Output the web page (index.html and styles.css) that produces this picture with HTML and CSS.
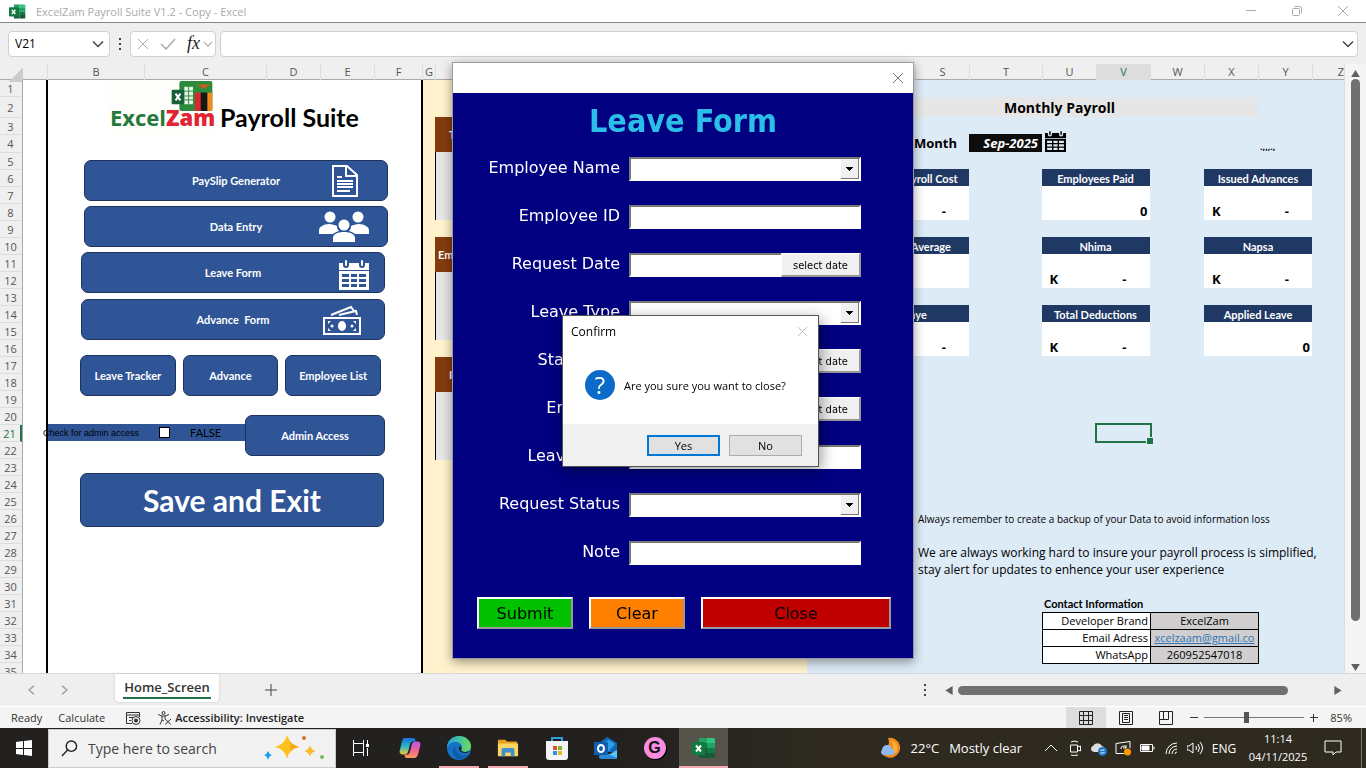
FILE: index.html
```html
<!DOCTYPE html>
<html lang="en">
<head>
    <meta charset="UTF-8">
    <meta name="viewport" content="width=device-width, initial-scale=1.0">
    <title>ExcelZam Payroll Suite V1.2</title>
    <link rel="stylesheet" href="styles.css">
</head>
<body>
    <!-- shared icons -->
    <svg class="defs" aria-hidden="true">
        <symbol id="i-excel" viewBox="0 0 24 24">
            <path fill="#21a366" d="M7 2h8v10H7z"/>
            <path fill="#33c481" d="M15 2h7a1 1 0 0 1 1 1v4h-8z"/>
            <path fill="#21a366" d="M15 7h8v5h-8z"/>
            <path fill="#107c41" d="M7 7h8v5H7z"/>
            <path fill="#185c37" d="M7 12h8v10H8a1 1 0 0 1-1-1z"/>
            <path fill="#107c41" d="M15 12h8v5h-8z"/>
            <path fill="#185c37" d="M15 17h8v4a1 1 0 0 1-1 1h-7z"/>
            <rect x="0" y="6" width="13" height="13" rx="1" fill="#107c41"/>
            <path stroke="#fff" stroke-width="2" d="M4 9.500l5 6M9 9.500l-5 6"/>
        </symbol>
        <symbol id="i-down" viewBox="0 0 12 12"><path fill="none" stroke="currentColor" stroke-width="1.500" d="M1 3.500l5 5 5-5"/></symbol>
        <symbol id="i-close" viewBox="0 0 12 12"><path fill="none" stroke="currentColor" stroke-width="1" d="M1 1l10 10M11 1L1 11"/></symbol>
        <symbol id="i-dots" viewBox="0 0 4 14"><path fill="currentColor" d="M1 1h2v2H1zM1 6h2v2H1zM1 11h2v2H1z"/></symbol>
        <symbol id="i-calendar" viewBox="0 0 30 30">
            <path fill="currentColor" fill-rule="evenodd" d="M0 3h4v2a3 3 0 0 0 6 0V3h10v2a3 3 0 0 0 6 0V3h4v7H0zM0 11h30v19H0zM3 14v3h7v-3zm9 0v3h6v-3zm8 0v3h7v-3zM3 19v3h7v-3zm9 0v3h6v-3zm8 0v3h7v-3zM3 24v3h7v-3zm9 0v3h6v-3zm8 0v3h7v-3z"/>
            <path stroke="currentColor" stroke-width="2" stroke-linecap="round" d="M7 1v4M23 1v4"/>
        </symbol>
    </svg>

    <header class="titlebar">
        <svg class="app-icon"><use href="#i-excel"/></svg>
        <span class="doc-name">ExcelZam Payroll Suite V1.2 - Copy - Excel</span>
        <div class="window-buttons">
            <button aria-label="Minimize"><svg viewBox="0 0 12 12"><path stroke="currentColor" d="M1 5.500h10"/></svg></button>
            <button aria-label="Restore"><svg viewBox="0 0 12 12"><g fill="none" stroke="currentColor"><rect x="1.500" y="3.500" width="7" height="7" rx="1"/><path d="M3.500 1.500h5a2 2 0 0 1 2 2v5"/></g></svg></button>
            <button aria-label="Close"><svg><use href="#i-close"/></svg></button>
        </div>
    </header>

    <div class="formula-bar">
        <div class="name-box">
            <input type="text" value="V21" aria-label="Name box">
            <button aria-label="Names"><svg><use href="#i-down"/></svg></button>
        </div>
        <svg class="dots"><use href="#i-dots"/></svg>
        <div class="fx-box">
            <button aria-label="Cancel"><svg><use href="#i-close"/></svg></button>
            <button aria-label="Enter"><svg class="tick" viewBox="0 0 16 12"><path fill="none" stroke="currentColor" stroke-width="1.500" d="M1 6l5 5L15 1"/></svg></button>
            <button class="fx" aria-label="Insert function">fx</button>
            <button aria-label="More"><svg class="small"><use href="#i-down"/></svg></button>
        </div>
        <div class="formula-box">
            <input type="text" aria-label="Formula">
            <button aria-label="Expand"><svg><use href="#i-down"/></svg></button>
        </div>
    </div>

    <main class="workspace">
        <div class="grid-area">
            <div class="col-heads">
                <span class="corner"></span>
                <span></span><span>B</span><span>C</span><span>D</span><span>E</span><span>F</span><span>G</span><span></span>
                <span>S</span><span>T</span><span>U</span><span class="active">V</span><span>W</span><span>X</span><span>Y</span><span class="last">Z</span>
            </div>
            <div class="sheet">
                <div class="row-heads">
                    <span>1</span><span>2</span><span>3</span><span>4</span><span>5</span><span>6</span><span>7</span><span>8</span><span>9</span><span>10</span>
                    <span>11</span><span>12</span><span>13</span><span>14</span><span>15</span><span>16</span><span>17</span><span>18</span><span>19</span><span>20</span>
                    <span class="active">21</span><span>22</span><span>23</span><span>24</span><span>25</span><span>26</span><span>27</span><span>28</span><span>29</span><span>30</span>
                    <span>31</span><span>32</span><span>33</span><span>34</span><span>35</span>
                </div>

                <section class="menu">
                    <div class="brand">
                        <div class="logo">
                            <svg viewBox="0 0 44 32">
                                <rect x="9" y="1" width="34" height="31" rx="2" fill="#2c8a3c"/>
                                <path fill="#e8f3e8" d="M14 7h9v18h-9z"/>
                                <path stroke="#2c8a3c" d="M14 11.500h9M14 16.500h9M14 20.500h9M18.500 7v18"/>
                                <path fill="#de2531" d="M25 13h6v19h-6z"/>
                                <path fill="#1a1414" d="M31 13h7v19h-7z"/>
                                <path fill="#f08a1c" d="M38 13h5v19h-5z"/>
                                <path fill="#c9611a" d="M26 4l6 1 2-1 2 1 6-1-5 3-1 2-2-1-2 1-1-2z"/>
                                <rect x="1" y="10" width="13" height="15" rx="1" fill="#17603a"/>
                                <path stroke="#fff" stroke-width="2" d="M5 14l5 7M10 14l-5 7"/>
                            </svg>
                            <span class="logo-text">Excel<b>Zam</b></span>
                        </div>
                        <h1>Payroll Suite</h1>
                    </div>

                    <div class="wide-buttons">
                        <button class="shape">PaySlip Generator
                            <svg class="doc" viewBox="0 0 26 32"><path fill="none" stroke="#fff" stroke-width="2" d="M1 1h14l10 9v21H1zM14 1v10h11"/><path stroke="#fff" stroke-width="2" d="M5 12h5M5 16h16M5 19h16M5 22h16M5 26h13"/></svg>
                        </button>
                        <button class="shape">Data Entry
                            <svg class="people" viewBox="0 0 50 32"><g fill="#fff"><circle cx="11" cy="6" r="5.500"/><circle cx="39" cy="6" r="5.500"/><circle cx="25" cy="14" r="5.500"/><path d="M0 23v-4c0-3 5-6 10-6 3 0 6 1 8 2 0 3 1 4 2 5-3 1-5 2-6 3zM50 23v-4c0-3-5-6-10-6-3 0-6 1-8 2 0 3-1 4-2 5 3 1 5 2 6 3zM14 31v-4c0-4 5-6 11-6s11 2 11 6v4z"/></g></svg>
                        </button>
                    </div>
                    <div class="wide-buttons shifted">
                        <button class="shape">Leave Form
                            <svg class="cal"><use href="#i-calendar"/></svg>
                        </button>
                        <button class="shape">Advance&nbsp; Form
                            <svg class="cash" viewBox="0 0 38 30"><g fill="none" stroke="#fff" stroke-width="2"><path d="M1 13h36v16H1z"/><path d="M8 10L28 2l3 4M16 10l17-4 1 4"/></g><path fill="#fff" d="M5 16h3l-3 3zM33 16v3l-3-3zM5 26v-3l3 3zM33 26h-3l3-3z"/><ellipse cx="19" cy="21" rx="4" ry="5" fill="#fff"/><circle cx="9" cy="21" r="1.500" fill="#fff"/><circle cx="29" cy="21" r="1.500" fill="#fff"/></svg>
                        </button>
                    </div>
                    <div class="small-buttons">
                        <button class="shape">Leave Tracker</button>
                        <button class="shape">Advance</button>
                        <button class="shape">Employee List</button>
                    </div>
                    <div class="admin">
                        <div class="admin-band">
                            <label for="admin">Check for admin access</label>
                            <input type="checkbox" id="admin">
                            <span>FALSE</span>
                        </div>
                        <button class="shape">Admin Access</button>
                    </div>
                    <button class="shape save">Save and Exit</button>
                </section>

                <section class="employees">
                    <div class="tile"><h3 class="indent">T</h3><p></p></div>
                    <div class="tile"><h3>Em</h3><p></p></div>
                    <div class="tile"><h3 class="indent">I</h3><p></p></div>
                </section>

                <section class="payroll">
                    <h2>Monthly Payroll</h2>
                    <div class="month">
                        <span class="month-label">Month</span>
                        <span class="month-value">Sep-2025</span>
                        <svg><use href="#i-calendar"/></svg>
                        <span class="marks">.,,,.,</span>
                    </div>
                    <div class="cards">
                        <div class="card"><h3>Total Payroll Cost</h3><p><span>K</span><span>-</span></p></div>
                        <div class="card"><h3>Employees Paid</h3><p class="num">0</p></div>
                        <div class="card"><h3>Issued Advances</h3><p><span>K</span><span>-</span></p></div>
                        <div class="card"><h3>Salary Average</h3><p></p></div>
                        <div class="card"><h3>Nhima</h3><p><span>K</span><span>-</span></p></div>
                        <div class="card"><h3>Napsa</h3><p><span>K</span><span>-</span></p></div>
                        <div class="card"><h3>Paye</h3><p><span>K</span><span>-</span></p></div>
                        <div class="card"><h3>Total Deductions</h3><p><span>K</span><span>-</span></p></div>
                        <div class="card"><h3>Applied Leave</h3><p class="num">0</p></div>
                    </div>
                    <div class="selected-cell"></div>
                    <p class="reminder">Always remember to create a backup of your Data to avoid information loss</p>
                    <p class="message">We are always working hard to insure your payroll process is simplified,<br>stay alert for updates to enhence your user experience</p>
                    <table class="contact">
                        <caption>Contact Information</caption>
                        <tr><th>Developer Brand</th><td>ExcelZam</td></tr>
                        <tr><th>Email Adress</th><td><a href="#">xcelzaam@gmail.co</a></td></tr>
                        <tr><th>WhatsApp</th><td>260952547018</td></tr>
                    </table>
                </section>
            </div>
        </div>
        <div class="v-scroll">
            <svg viewBox="0 0 10 8"><path fill="#606060" d="M5 0l5 8H0z"/></svg>
            <div class="v-track"><div class="v-thumb"></div></div>
            <svg viewBox="0 0 10 8"><path fill="#606060" d="M0 0h10L5 8z"/></svg>
        </div>
    </main>

    <nav class="tabs">
        <button class="nav-btn" aria-label="Previous sheet"><svg viewBox="0 0 8 12"><path fill="none" stroke="#999" stroke-width="1.500" d="M7 1L1 6l6 5"/></svg></button>
        <button class="nav-btn" aria-label="Next sheet"><svg viewBox="0 0 8 12"><path fill="none" stroke="#999" stroke-width="1.500" d="M1 1l6 5-6 5"/></svg></button>
        <a class="tab" href="#"><span>Home_Screen</span></a>
        <button class="add" aria-label="New sheet"><svg viewBox="0 0 12 12"><path stroke="#444" d="M6 0v12M0 6h12"/></svg></button>
        <svg class="dots"><use href="#i-dots"/></svg>
        <div class="h-scroll">
            <svg viewBox="0 0 8 10"><path fill="#606060" d="M8 0v10L0 5z"/></svg>
            <div class="h-track"><div class="h-thumb"></div></div>
            <svg viewBox="0 0 8 10"><path fill="#606060" d="M0 0v10l8-5z"/></svg>
        </div>
    </nav>

    <footer class="status">
        <span class="ready">Ready</span>
        <span class="calc">Calculate</span>
        <svg class="macro" viewBox="0 0 16 14"><g fill="none" stroke="#333"><path d="M7 12.500H1.500v-11h13V6M1.500 4h13M4 6.500h4M4 9.500h2"/><circle cx="11" cy="9.500" r="4"/></g><circle cx="11" cy="9.500" r="2" fill="#333"/></svg>
        <svg class="access" viewBox="0 0 16 14"><g fill="none" stroke="#333"><circle cx="6.500" cy="2" r="1.500"/><path d="M1 3.500l4 1.500h3l4-1.500M5 5v4l-2 4.500M8 5v3M5 9l2 1M8 8l6 5.500M14 8l-6 5.500"/></g></svg>
        <b>Accessibility: Investigate</b>
        <div class="views">
            <button class="on" aria-label="Normal"><svg viewBox="0 0 14 14"><path fill="none" stroke="#222" d="M.5.5h13v13H.5zM.5 4.500h13M.5 9.500h13M4.500.5v13M9.500.5v13"/></svg></button>
            <button aria-label="Page layout"><svg viewBox="0 0 14 14"><path fill="none" stroke="#222" d="M.5.5h13v13H.5zM3.500 2.500h7v9h-7zM5 4.500h4M5 6.500h4M5 8.500h4"/></svg></button>
            <button aria-label="Page break"><svg viewBox="0 0 14 14"><path fill="none" stroke="#222" d="M.5 13.500h13V.5H.5zM4.500.5v8M.5 8.500h9V.5"/></svg></button>
        </div>
        <button class="zoom-btn" aria-label="Zoom out"><svg viewBox="0 0 8 8"><path stroke="#333" d="M0 3.500h8"/></svg></button>
        <input class="zoom" type="range" min="10" max="160" value="73" aria-label="Zoom">
        <button class="zoom-btn" aria-label="Zoom in"><svg viewBox="0 0 8 8"><path stroke="#333" d="M0 3.500h8M3.500 0v8"/></svg></button>
        <span class="percent">85%</span>
    </footer>

    <div class="taskbar">
        <button class="start" aria-label="Start"><svg viewBox="0 0 16 16"><path fill="#fff" d="M0 2l7-1v7H0zM8 1l8-1v8H8zM0 9h7v6l-7-1zM8 9h8v7l-8-1z"/></svg></button>
        <div class="search">
            <svg viewBox="0 0 18 18"><g fill="none" stroke="#222" stroke-width="1.500"><circle cx="11" cy="6.500" r="5.500"/><path d="M7 10.500L1 17"/></g></svg>
            <input type="text" placeholder="Type here to search" aria-label="Search">
            <svg class="sparkle" viewBox="0 0 64 28"><path fill="#fcc21b" d="M24 1q2 9 12 12-10 2-12 12-2-10-12-12 10-3 12-12z"/><path fill="#f9a61a" d="M24 1q2 9 12 12-6 1-9 5 2-8-3-17z"/><path fill="#fcb92b" d="M47 11q1 5 6 6-5 1-6 6-1-5-6-6 5-1 6-6z"/><path fill="#1f9cf0" d="M5 17q1 3 4 4-3 1-4 5-1-4-4-5 3-1 4-4z"/><circle cx="41" cy="4" r="2" fill="#d8722c"/><circle cx="59" cy="23" r="2" fill="#7bb661"/></svg>
        </div>
        <div class="apps">
            <button aria-label="Task view"><svg viewBox="0 0 24 24"><path fill="none" stroke="#fff" d="M4.500 4v3.500h10V4M4.500 20v-3.500h10V20M4.500 7.500v9M14.500 7.500v9M18.500 4v4M18.500 12v8"/><path fill="#fff" d="M17 8h3v3h-3z"/></svg></button>
            <button aria-label="Copilot">
                <svg viewBox="0 0 24 24">
                    <defs>
                        <linearGradient id="cp1" x1="0" y1="0" x2="0" y2="1"><stop offset="0" stop-color="#1a6fe0"/><stop offset=".5" stop-color="#27b5c8"/><stop offset="1" stop-color="#f2c831"/></linearGradient>
                        <linearGradient id="cp2" x1="0" y1="0" x2="0" y2="1"><stop offset="0" stop-color="#b35ee8"/><stop offset=".5" stop-color="#ef5f9a"/><stop offset="1" stop-color="#ff9a54"/></linearGradient>
                    </defs>
                    <path fill="url(#cp1)" d="M6 1h9c2 0 3 1 3 4h-3c-2 0-2 1-3 3l-2 8c-1 2-2 3-4 3H4c-3 0-4-2-3-5l2-8c1-3 1-5 3-5z"/>
                    <path fill="url(#cp2)" d="M18 5h2c3 0 4 2 3 5l-2 8c-1 3-2 5-4 5H9c-2 0-3-1-3-4h3c2 0 2-1 3-3l2-8c1-2 2-3 4-3z"/>
                </svg>
            </button>
            <button class="open" aria-label="Edge">
                <svg viewBox="0 0 24 24">
                    <defs><linearGradient id="ed" x1="0" y1="0" x2="1" y2="0"><stop offset="0" stop-color="#1ba7e6"/><stop offset="1" stop-color="#6bdc5a"/></linearGradient></defs>
                    <circle cx="12" cy="12" r="12" fill="#1672c4"/>
                    <path fill="url(#ed)" d="M0 12C0 5 5 0 12 0s12 5 12 10c0 4-3 6-6 6-2 0-4-1-4-2s1-1 1-3c0-3-3-5-7-5-3 0-7 2-8 6z"/>
                    <path fill="#0f5da8" d="M8 10c-3 3-3 9 2 13 5 1 9-1 12-5-3 2-9 2-11-1-2-2-3-4-3-7z"/>
                    <path fill="#22201e" d="M12 10c-1 4 1 7 6 7 2 0 4-1 5-2-1 0-3 1-5 1s-4-1-4-2 1-1 1-2z"/>
                </svg>
            </button>
            <button class="open" aria-label="File Explorer"><svg viewBox="0 0 24 24"><path fill="#e8a21c" d="M1 4c0-1 0-1 1-1h7l2 2h11v5H1z"/><path fill="#fcd462" d="M1 7h22v13c0 1 0 1-1 1H2c-1 0-1 0-1-1z"/><path fill="#3f8ed0" d="M5 21v-7c0-1 1-2 2-2h10c1 0 2 1 2 2v7h-4v-4H9v4z"/></svg></button>
            <button aria-label="Store"><svg viewBox="0 0 24 24"><path fill="none" stroke="#2ba0dc" stroke-width="2" d="M7 6V2h10v4"/><path fill="#f4f4f4" d="M1 5h22v16c0 2-1 3-3 3H4c-2 0-3-1-3-3z"/><path fill="#e04e2a" d="M8 10h4v4H8z"/><path fill="#7ab52c" d="M13 10h4v4h-4z"/><path fill="#2796e0" d="M8 15h4v4H8z"/><path fill="#f7b51b" d="M13 15h4v4h-4z"/></svg></button>
            <button aria-label="Outlook"><svg viewBox="0 0 24 24"><path fill="#1366b8" d="M5 7l8-6 10 6v9H5z"/><path fill="#2a9fe8" d="M6 8l9-4 6 4-6 7H6z"/><path fill="#55c8f5" d="M23 8v13c0 1-1 2-2 2H7l16-9z"/><path fill="#2a8ad8" d="M6 14l17 8c0 1-1 1-2 1H7c-1 0-2-1-2-2z"/><rect x="0" y="6" width="14" height="13" rx="1" fill="#0f5fb0"/><ellipse cx="7" cy="12.500" rx="3" ry="3.500" fill="none" stroke="#fff" stroke-width="2"/></svg></button>
            <button aria-label="G app"><span class="g-icon">G</span></button>
            <button class="open current" aria-label="Excel"><svg><use href="#i-excel"/></svg></button>
        </div>
        <div class="weather">
            <svg viewBox="0 0 22 22"><path fill="#f08a1c" d="M9 1a10 10 0 1 1-7 14 10 10 0 0 0 7-14z"/><path fill="#fbb034" d="M12 3a9 9 0 0 1 6 12l-8 4a12 12 0 0 0 2-16z"/><path fill="#8fb9ee" d="M3 13a5 5 0 0 1 5-5 5 5 0 0 1 5 4 3 3 0 0 1-1 6H4a3 3 0 0 1-1-5z"/></svg>
            <span>22°C</span><span>Mostly clear</span>
        </div>
        <div class="tray">
            <svg viewBox="0 0 16 16"><path d="M2 11l6-6 6 6"/></svg>
            <svg viewBox="0 0 16 16"><path d="M3.500 5h7v7h-7zM10.500 7l3-1v5l-3-1M4 2q3-2 7 0M4 15q3 1 7 0"/></svg>
            <svg viewBox="0 0 16 16"><path fill="#ddd" stroke="none" d="M1 11a3 3 0 0 1 1-5 5 5 0 0 1 9 0 4 4 0 0 1 3 3l-6 3H3z"/><circle cx="11.500" cy="11.500" r="4.500" fill="#1c76cc" stroke="none"/><path d="M9.500 11l1-1h3M13.500 12l-1 1h-3"/></svg>
            <svg viewBox="0 0 16 16"><path d="M1 3.500l14-2V8M1 3.500v10h8M6 9a2.500 2.500 0 0 1 5-1M11 5v3H8"/><circle cx="12.500" cy="12" r="3.500" fill="#ff9800" stroke="none"/></svg>
            <svg viewBox="0 0 16 16"><path d="M1.500 4.500h12v7h-12zM15 6.500v3"/><path fill="#fff" d="M3 6h7v4H3z"/></svg>
            <svg viewBox="0 0 16 16"><path d="M3 14A11 11 0 0 1 14 3M6 14a8 8 0 0 1 8-8M9 14a5 5 0 0 1 5-5M12 14a2 2 0 0 1 2-2"/></svg>
            <svg viewBox="0 0 16 16"><path d="M0 6h2l4-3v10l-4-3H0zM9 6q1 2 0 4M11 4q3 4 0 8M13 2q5 6 0 12"/></svg>
        </div>
        <span class="lang">ENG</span>
        <div class="clock"><span>11:14</span><span>04/11/2025</span></div>
        <button class="notify" aria-label="Notifications"><svg viewBox="0 0 18 16"><path fill="none" stroke="#fff" d="M1 1h16v11h-5l-3 3v-3H1z"/></svg></button>
    </div>

    <div class="overlay">
        <form class="leave-form">
            <div class="form-bar"><button type="button" aria-label="Close form"><svg><use href="#i-close"/></svg></button></div>
            <h2>Leave Form</h2>
            <div class="fields">
                <label for="name">Employee Name</label>
                <div class="combo"><select id="name"></select></div>
                <label for="emp-id">Employee ID</label>
                <input type="text" id="emp-id">
                <label for="request">Request Date</label>
                <div class="date"><input type="text" id="request"><button type="button">select date</button></div>
                <label for="type">Leave Type</label>
                <div class="combo"><select id="type"></select></div>
                <label for="start">Start Date</label>
                <div class="date"><input type="text" id="start"><button type="button">select date</button></div>
                <label for="end">End Date</label>
                <div class="date"><input type="text" id="end"><button type="button">select date</button></div>
                <label for="days">Leave Days</label>
                <input type="text" id="days">
                <label for="status">Request Status</label>
                <div class="combo"><select id="status"></select></div>
                <label for="note">Note</label>
                <input type="text" id="note">
            </div>
            <div class="actions">
                <button type="button" class="submit">Submit</button>
                <button type="button" class="clear">Clear</button>
                <button type="button" class="close">Close</button>
            </div>

            <div class="confirm" role="dialog" aria-labelledby="confirm-title">
                <div class="confirm-bar"><span id="confirm-title">Confirm</span><svg><use href="#i-close"/></svg></div>
                <div class="confirm-body"><span class="question">?</span><span>Are you sure you want to close?</span></div>
                <div class="confirm-actions"><button type="button" class="default">Yes</button><button type="button">No</button></div>
            </div>
        </form>
    </div>
</body>
</html>
```
FILE: styles.css
```css
* {
    box-sizing: border-box;
}
body {
    margin: 0;
    height: 100vh;
    display: flex;
    flex-direction: column;
    overflow: hidden;
    background: #efefef;
    color: #000;
    font-family: "Open Sans", sans-serif;
    font-size: 12px;
}
h1, h2, h3, p {
    margin: 0;
}
button {
    font-family: inherit;
    border: none;
    background: none;
    padding: 0;
    color: inherit;
}
input {
    font-family: inherit;
    min-width: 0;
}
svg {
    display: block;
    flex: none;
}
.defs {
    position: absolute;
    width: 0;
    height: 0;
}

/* title and formula bars */
.titlebar {
    display: flex;
    align-items: center;
    height: 23px;
    padding-left: 9px;
    background: #fff;
    border-bottom: 1px solid #888;
    color: #aaa;
}
.app-icon {
    width: 17px;
    height: 17px;
    margin-right: 10px;
}
.doc-name {
    flex: 1;
    font-size: 11px;
}
.window-buttons {
    display: flex;
}
.window-buttons button {
    width: 46px;
    display: flex;
    justify-content: center;
}
.window-buttons svg {
    width: 12px;
    height: 12px;
}
.formula-bar {
    display: flex;
    align-items: center;
    height: 41px;
    padding: 0 8px;
    background: #efefef;
}
.name-box, .fx-box, .formula-box {
    display: flex;
    align-items: center;
    height: 26px;
    background: #fff;
    border: 1px solid #d0d0d0;
    border-radius: 4px;
}
.name-box {
    width: 102px;
    padding: 0 5px;
}
.name-box input, .formula-box input {
    flex: 1;
    border: none;
    background: none;
    padding: 0 1px;
    font-size: 12px;
}
.formula-bar svg {
    width: 12px;
    height: 12px;
    color: #444;
}
.formula-bar .dots {
    width: 4px;
    height: 14px;
    margin: 0 8px;
}
.fx-box {
    width: 86px;
    padding: 0 2px 0 6px;
    gap: 11px;
    margin-right: 4px;
}
.fx-box svg {
    color: #aaa;
}
.fx-box .tick {
    width: 16px;
}
.fx-box .small {
    width: 10px;
    margin-left: -8px;
}
.fx {
    font: italic 18px "Liberation Serif", serif;
    color: #222;
}
.formula-box {
    flex: 1;
    padding: 0 3px;
}

/* sheet */
.workspace {
    flex: 1;
    min-height: 0;
    display: flex;
    border-bottom: 1px solid #d8d8d8;
}
.grid-area {
    flex: 1;
    min-width: 0;
    display: flex;
    flex-direction: column;
    overflow: hidden;
}
.col-heads {
    display: grid;
    grid-template-columns: 23px 25px 97px 122px 54px 54px 48px 13px 1fr 54px 73px 54px 54px 54px 54px 54px 31px;
    height: 16px;
    border-bottom: 1px solid #aaa;
    color: #555;
    font-size: 11px;
    line-height: 16px;
    text-align: center;
}
.col-heads span {
    border-right: 1px solid #ddd;
}
.col-heads .corner {
    background: linear-gradient(135deg, transparent 65%, #ccc 65%);
    border: none;
}
.col-heads .active {
    background: #ddd;
    color: #1f7246;
    border-bottom: 2px solid #1f7246;
}
.col-heads .last {
    border: none;
    text-align: right;
}
.sheet {
    flex: 1;
    min-height: 0;
    display: flex;
}
.row-heads {
    width: 23px;
    border-right: 1px solid #aaa;
    color: #555;
    font-size: 11px;
    line-height: 17px;
    text-align: center;
    overflow: hidden;
}
.row-heads span {
    display: block;
    height: 17px;
    padding-right: 1px;
    border-bottom: 1px solid #ddd;
}
.row-heads span:nth-child(2) {
    height: 21px;
    line-height: 21px;
}
.row-heads span:nth-child(4) {
    height: 18px;
}
.row-heads .active {
    color: #1f7246;
    border-right: 2px solid #1f7246;
}

/* left menu */
.menu {
    width: 377px;
    margin-left: 23px;
    border: solid #000;
    border-width: 0 2px;
    background: #fff;
    box-shadow: -23px 0 0 #fff;
    font-family: Lato, sans-serif;
}
.brand {
    display: flex;
    align-items: flex-end;
    height: 54px;
    padding-left: 60px;
    gap: 5px;
}
.logo {
    width: 107px;
    height: 54px;
    padding-left: 2px;
    background: #fefefa;
}
.logo svg {
    width: 44px;
    height: 31px;
    margin-left: 60px;
}
.logo-text {
    display: block;
    margin-top: -6px;
    color: #25793a;
    font: bold 22px/24px "Open Sans", sans-serif;
}
.logo-text b {
    color: #e02433;
}
.brand h1 {
    font-size: 25px;
    line-height: 34px;
}
.shape {
    display: flex;
    align-items: center;
    justify-content: center;
    position: relative;
    height: 41px;
    background: #2f5597;
    border: 1px solid #1c335b;
    border-radius: 7px;
    color: #fff;
    font: bold 11px Lato, sans-serif;
}
.wide-buttons {
    display: flex;
    flex-direction: column;
    gap: 5px;
    width: 304px;
    margin: 26px 0 0 36px;
}
.wide-buttons.shifted {
    gap: 6px;
    margin: 5px 0 0 33px;
}
.shape svg {
    position: absolute;
}
.shape .doc {
    width: 26px;
    height: 32px;
    right: 29px;
}
.shape .people {
    width: 50px;
    height: 32px;
    right: 18px;
}
.shape .cal {
    width: 30px;
    height: 30px;
    right: 15px;
    bottom: 2px;
    color: #fff;
}
.shape .cash {
    width: 38px;
    height: 30px;
    right: 23px;
}
.small-buttons {
    display: grid;
    grid-template-columns: 1fr 1fr 1fr;
    gap: 7px;
    width: 301px;
    margin: 15px 0 0 32px;
}
.admin {
    display: flex;
    align-items: flex-start;
    margin-top: 19px;
}
.admin-band {
    display: flex;
    align-items: center;
    width: 197px;
    height: 17px;
    margin-top: 9px;
    background: #2f5597;
    font-size: 10px;
    white-space: nowrap;
}
.admin-band label {
    margin-left: -5px;
    font: 9px "Liberation Sans", sans-serif;
}
.admin-band input {
    appearance: none;
    width: 11px;
    height: 11px;
    margin: 0 20px;
    background: #fff;
    border: 1px solid #000;
}
.admin-band span {
    font-size: 11px;
}
.admin .shape {
    width: 140px;
}
.shape.save {
    width: 304px;
    height: 54px;
    margin: 17px 0 0 32px;
    font: bold 30px Lato, sans-serif;
}

/* middle strip */
.employees {
    flex: 1;
    background: #fff2cc;
    padding: 37px 12px 0;
}
.tile {
    margin-bottom: 17px;
}
.tile h3 {
    height: 35px;
    padding-left: 3px;
    background: #843c0c;
    color: #fff;
    font: bold 11px/35px Lato, sans-serif;
}
.tile .indent {
    padding-left: 14px;
}
.tile p {
    height: 68px;
    background: #e7e6e6;
    border-left: 1px solid #000;
}

/* payroll summary */
.payroll {
    position: relative;
    width: 537px;
    padding: 17px 32px 0 54px;
    background: #ddebf7;
    font-family: "Open Sans", sans-serif;
}
.payroll h2 {
    height: 20px;
    margin-right: 54px;
    background: #e7e6e6;
    font: bold 14px/21px "Open Sans", sans-serif;
    text-align: center;
}
.month {
    display: flex;
    align-items: flex-end;
    height: 35px;
    font-size: 13px;
    line-height: 18px;
    font-weight: bold;
}
.month-label {
    width: 108px;
    padding-left: 53px;
}
.month-value {
    width: 73px;
    padding-right: 4px;
    background: #0d0d0d;
    color: #fff;
    font-style: italic;
    text-align: right;
}
.month svg {
    width: 25px;
    height: 21px;
    margin-left: 1px;
}
.marks {
    margin-left: 192px;
    font-size: 9px;
    line-height: 10px;
}
.cards {
    display: grid;
    grid-template-columns: 108px 108px 108px;
    justify-content: space-between;
    row-gap: 17px;
    margin-top: 17px;
}
.cards .card:nth-child(3n + 2) {
    margin-left: 9px;
    margin-right: -9px;
}
.card h3 {
    height: 17px;
    background: #1f3864;
    color: #fff;
    font: bold 11px/19px Lato, sans-serif;
    text-align: center;
    white-space: nowrap;
}
.card p {
    display: flex;
    align-items: flex-end;
    justify-content: space-between;
    height: 34px;
    padding: 0 23px 0 8px;
    background: #fff;
    font-size: 13px;
    line-height: 18px;
    font-weight: bold;
}
.card .num {
    justify-content: flex-end;
    padding-right: 2px;
}
.selected-cell {
    position: absolute;
    top: 343px;
    right: 192px;
    width: 57px;
    height: 20px;
    border: 2px solid #217346;
}
.selected-cell::after {
    content: "";
    position: absolute;
    right: -3px;
    bottom: -3px;
    width: 6px;
    height: 6px;
    background: #217346;
    border: solid #ddebf7;
    border-width: 1px 0 0 1px;
}
.reminder {
    margin: 155px 0 0 57px;
    font-size: 10px;
    line-height: 17px;
    white-space: nowrap;
}
.message {
    margin: 16px 0 0 57px;
    font-size: 12px;
    line-height: 17px;
    white-space: nowrap;
}
.contact {
    width: 217px;
    margin: 17px 0 0 181px;
    table-layout: fixed;
    border-collapse: collapse;
    font-size: 11px;
    line-height: 16px;
}
.contact caption {
    padding-left: 2px;
    font: bold 11px/17px Lato, sans-serif;
    text-align: left;
}
.contact th, .contact td {
    height: 17px;
    padding: 0 2px;
    border: 1px solid #000;
    background: #fff;
    font-weight: normal;
    text-align: right;
}
.contact td {
    padding: 0;
    background: #d0cece;
    text-align: center;
}
.contact a {
    color: #2e75b6;
}

/* scrollbars */
.v-scroll {
    display: flex;
    flex-direction: column;
    align-items: center;
    gap: 2px;
    width: 22px;
    padding: 6px 0 2px;
    background: #f5f5f5;
    border-left: 1px solid #ddd;
}
.v-scroll svg {
    width: 9px;
    height: 7px;
}
.v-track {
    flex: 1;
    width: 9px;
}
.v-thumb {
    height: 93%;
    border-radius: 5px;
    background: #707070;
}

/* sheet tabs */
.tabs {
    display: flex;
    align-items: center;
    height: 33px;
    padding: 0 24px 0 15px;
    background: #efefef;
    border-bottom: 1px solid #fff;
}
.nav-btn {
    width: 33px;
    display: flex;
    justify-content: center;
}
.nav-btn svg {
    width: 7px;
    height: 10px;
}
.tab {
    align-self: flex-start;
    width: 104px;
    height: 28px;
    margin-left: 34px;
    padding: 3px 8px 0;
    background: #fff;
    border-radius: 0 0 4px 4px;
    box-shadow: 0 0 2px #bbb;
    color: #333;
    font-size: 13px;
    font-weight: 600;
    text-align: center;
    text-decoration: none;
}
.tab span {
    display: block;
    line-height: 20px;
    border-bottom: 2px solid #1f7246;
}
.add {
    margin-left: 46px;
    flex: 1;
}
.add svg {
    width: 12px;
    height: 12px;
}
.tabs .dots {
    width: 4px;
    height: 14px;
    margin-right: 18px;
    color: #444;
}
.h-scroll {
    display: flex;
    align-items: center;
    gap: 5px;
    width: 397px;
}
.h-scroll svg {
    width: 8px;
    height: 9px;
}
.h-track {
    flex: 1;
}
.h-thumb {
    width: 89%;
    height: 9px;
    border-radius: 5px;
    background: #707070;
}

/* status bar */
.status {
    display: flex;
    align-items: center;
    height: 21px;
    padding: 0 14px 0 11px;
    background: #f4f4f4;
    color: #333;
    font-size: 11px;
}
.calc {
    margin: 0 20px 0 16px;
}
.macro, .access {
    width: 16px;
    height: 14px;
    margin-right: 16px;
}
.access {
    margin-right: 2px;
}
.status b {
    flex: 1;
    color: #222;
    font-weight: 600;
}
.views {
    display: flex;
    align-self: stretch;
    margin-right: 4px;
}
.views button {
    width: 40px;
    display: flex;
    align-items: center;
    justify-content: center;
}
.views .on {
    background: #ddd;
}
.views svg {
    width: 14px;
    height: 14px;
}
.zoom-btn svg {
    width: 8px;
    height: 8px;
}
.zoom {
    appearance: none;
    width: 100px;
    height: 12px;
    margin: 0 6px;
    background: linear-gradient(#777, #777) center / 100% 1px no-repeat;
}
.zoom::-webkit-slider-thumb {
    appearance: none;
    width: 5px;
    height: 11px;
    background: #555;
}
.percent {
    margin-left: 12px;
}

/* taskbar */
.taskbar {
    display: flex;
    align-items: center;
    height: 40px;
    background: linear-gradient(90deg, #222120 45%, #2e2a20 60%);
    color: #fff;
    font-size: 13px;
}
.start {
    display: flex;
    justify-content: center;
    width: 48px;
}
.start svg {
    width: 16px;
    height: 16px;
}
.search {
    display: flex;
    align-items: center;
    width: 288px;
    height: 39px;
    padding: 0 8px 0 12px;
    background: #f2f2f2;
    border: 1px solid #ccc;
}
.search svg {
    width: 17px;
    height: 17px;
}
.search .sparkle {
    width: 64px;
    height: 28px;
}
.search input {
    flex: 1;
    border: none;
    padding: 0 10px;
    background: none;
    font-size: 14px;
}
.search input::placeholder {
    color: #444;
}
.apps {
    display: flex;
    flex: 1;
}
.apps button {
    display: flex;
    align-items: center;
    justify-content: center;
    width: 49px;
    height: 40px;
    border: solid transparent;
    border-width: 2px 0;
}
.apps .open {
    background: linear-gradient(#f4a9b0, #f4a9b0) bottom / 40px 2px no-repeat border-box;
}
.apps .current {
    background: linear-gradient(#f4a9b0, #f4a9b0) bottom / 100% 2px no-repeat border-box, #56544a;
}
.apps svg {
    width: 24px;
    height: 24px;
}
.apps button:nth-child(2) svg, .apps button:nth-child(4) svg {
    width: 22px;
    height: 22px;
}
.g-icon {
    width: 22px;
    height: 22px;
    border-radius: 50%;
    background: #fa8ce0;
    box-shadow: 1px 1px 0 #000;
    color: #111;
    font: bold 16px/22px "Liberation Sans", sans-serif;
}
.weather {
    display: flex;
    align-items: center;
    gap: 10px;
    margin-right: 21px;
}
.weather svg {
    width: 22px;
    height: 22px;
}
.tray {
    display: flex;
    gap: 8px;
}
.tray svg {
    width: 16px;
    height: 16px;
    fill: none;
    stroke: #fff;
}
.lang {
    width: 42px;
    font-size: 12px;
    text-align: center;
}
.clock {
    display: flex;
    flex-direction: column;
    width: 66px;
    font-size: 11px;
    line-height: 18px;
    text-align: center;
}
.notify {
    width: 51px;
    height: 40px;
    padding-right: 6px;
    margin-right: 4px;
    border-right: 1px solid #777;
    display: flex;
    align-items: center;
    justify-content: center;
}
.notify svg {
    width: 18px;
    height: 16px;
}

/* leave form window */
.overlay {
    position: fixed;
    inset: 62px 0 auto;
    display: flex;
    justify-content: center;
}
.leave-form {
    position: relative;
    width: 462px;
    height: 597px;
    background: #000080;
    border: 1px solid #9a9aa8;
    box-shadow: 0 3px 10px rgba(0, 0, 0, 0.4);
    font-family: "DejaVu Sans", sans-serif;
}
.form-bar {
    display: flex;
    align-items: center;
    justify-content: flex-end;
    height: 30px;
    padding-right: 9px;
    background: #fff;
    color: #777;
}
.form-bar svg {
    width: 12px;
    height: 12px;
}
.leave-form h2 {
    margin: 9px 0 16px;
    color: #2bbfe8;
    font: bold 32px/39px "DejaVu Sans Condensed", "DejaVu Sans", sans-serif;
    text-align: center;
}
.fields {
    display: grid;
    grid-template-columns: 167px 232px;
    grid-auto-rows: 24px;
    gap: 24px 9px;
}
.fields label {
    color: #fff;
    font-size: 16px;
    line-height: 22px;
    text-align: right;
}
.fields input, .combo {
    width: 100%;
    height: 24px;
    background: #fff;
    border: 2px solid #fff;
    border-top-color: #777;
    border-left-color: #777;
    font-size: 12px;
}
.combo {
    position: relative;
}
.combo select {
    appearance: none;
    width: 100%;
    height: 20px;
    border: none;
    background: #fff;
}
.combo::after {
    content: "";
    position: absolute;
    top: 0;
    right: 0;
    width: 17px;
    height: 19px;
    background: linear-gradient(#000, #000) 5px 8px / 7px 1px no-repeat,
        linear-gradient(#000, #000) 6px 9px / 5px 1px no-repeat,
        linear-gradient(#000, #000) 7px 10px / 3px 1px no-repeat,
        linear-gradient(#000, #000) 8px 11px / 1px 1px no-repeat, #f0f0f0;
    border: solid #777;
    border-width: 0 1px 1px 0;
}
.date {
    display: flex;
}
.date input {
    flex: 1;
    border-right: none;
}
.date button {
    width: 80px;
    padding-top: 2px;
    background: #f0f0f0;
    border: 1px solid #fff;
    border-right: 2px solid #999;
    border-bottom: 2px solid #999;
    color: #000;
    font: 11px "DejaVu Sans Condensed", "DejaVu Sans", sans-serif;
}
.actions {
    display: grid;
    grid-template-columns: 96px 96px 190px;
    gap: 16px;
    padding: 32px 0 0 24px;
}
.actions button {
    height: 32px;
    border: 2px solid #fff;
    border-right-color: #999;
    border-bottom-color: #999;
    font-size: 16px;
    color: #000;
}
.actions .submit {
    background: #00c000;
}
.actions .clear {
    background: #ff8000;
}
.actions .close {
    background: #c00000;
}

/* confirm box */
.confirm {
    position: absolute;
    top: 252px;
    left: 109px;
    width: 257px;
    background: #fff;
    border: 1px solid #555;
    box-shadow: 2px 4px 14px rgba(0, 0, 0, 0.4);
    color: #000;
    font-family: "Open Sans", sans-serif;
    font-size: 11px;
}
.confirm-bar {
    display: flex;
    align-items: center;
    justify-content: space-between;
    height: 30px;
    padding: 0 10px 0 8px;
    font-size: 12px;
}
.confirm-bar svg {
    width: 11px;
    height: 11px;
    color: #bbb;
}
.confirm-body {
    display: flex;
    align-items: center;
    gap: 9px;
    height: 78px;
    padding-left: 22px;
}
.question {
    width: 30px;
    height: 30px;
    border-radius: 50%;
    background: #0a6cc8;
    color: #fff;
    font-size: 24px;
    line-height: 30px;
    text-align: center;
}
.confirm-actions {
    display: flex;
    justify-content: flex-end;
    gap: 9px;
    height: 42px;
    padding: 11px 16px 10px;
    background: #f0f0f0;
}
.confirm-actions button {
    width: 73px;
    background: #e1e1e1;
    border: 1px solid #adadad;
    font-size: 11px;
}
.confirm-actions .default {
    border: 2px solid #0078d7;
}
```
